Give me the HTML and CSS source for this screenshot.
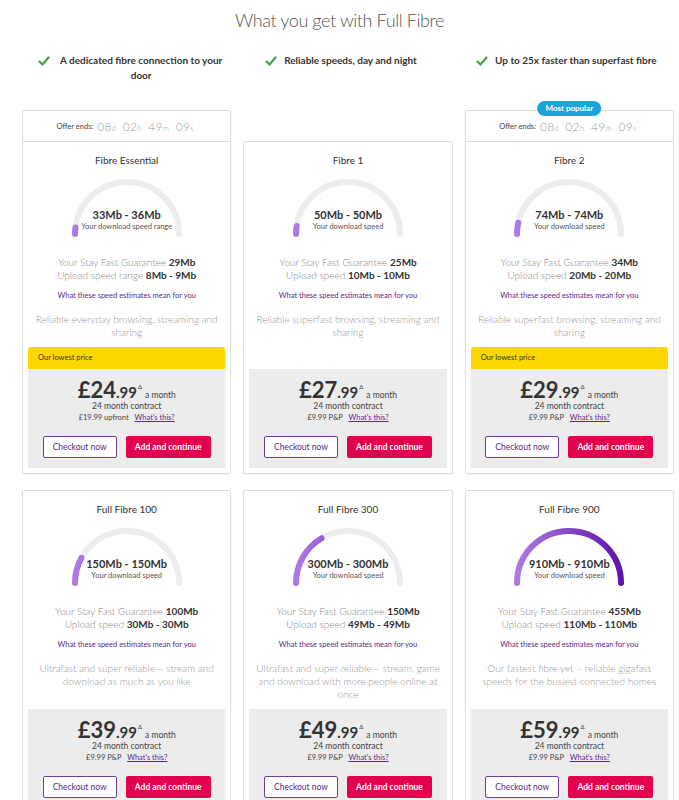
FILE: index.html
```html
<!DOCTYPE html>
<html lang="en">
<head>
    <meta charset="UTF-8">
    <meta name="viewport" content="width=device-width, initial-scale=1.0">
    <title>Full Fibre broadband</title>
    <link rel="stylesheet" href="styles.css">
</head>
<body>
    <h1 class="page-title">What you get with Full Fibre</h1>

    <ul class="features">
        <li>
            <svg class="tick" viewBox="0 0 12 10"><path d="M1.5 5.5 L4.5 8.5 L10.5 1.5"/></svg>
            <span>A dedicated fibre connection to your door</span>
        </li>
        <li>
            <svg class="tick" viewBox="0 0 12 10"><path d="M1.5 5.5 L4.5 8.5 L10.5 1.5"/></svg>
            <span>Reliable speeds, day and night</span>
        </li>
        <li>
            <svg class="tick" viewBox="0 0 12 10"><path d="M1.5 5.5 L4.5 8.5 L10.5 1.5"/></svg>
            <span>Up to 25x faster than superfast fibre</span>
        </li>
    </ul>

    <!-- shared gradient for the speed dials -->
    <svg class="svg-defs" width="0" height="0">
        <defs>
            <linearGradient id="dial-grad" gradientUnits="userSpaceOnUse" x1="0" y1="0" x2="112" y2="0">
                <stop offset="0" stop-color="#b07ee8"/>
                <stop offset="1" stop-color="#5c10a6"/>
            </linearGradient>
        </defs>
    </svg>

    <div class="plans">
        <!-- Fibre Essential -->
        <div class="plan">
            <div class="offer">Offer ends: <span class="timer">08<small>d</small> 02<small>h</small> 49<small>m</small> 09<small>s</small></span></div>
            <div class="plan-body">
                <h2 class="plan-name">Fibre Essential</h2>
                <div class="gauge">
                    <svg viewBox="0 0 112 62" width="112" height="62">
                        <path class="track" d="M4 57 A52 52 0 0 1 108 57"/>
                        <path class="fill" d="M4 57 A52 52 0 0 1 108 57" pathLength="100" stroke-dasharray="4 200"/>
                    </svg>
                    <div class="gauge-text"><b>33Mb - 36Mb</b><span>Your download speed range</span></div>
                </div>
                <p class="speeds">Your Stay Fast Guarantee <b>29Mb</b><br>Upload speed range <b>8Mb - 9Mb</b></p>
                <a class="estimates" href="#">What these speed estimates mean for you</a>
                <p class="blurb">Reliable everyday browsing, streaming and sharing</p>
                <div class="price-box">
                    <div class="lowest">Our lowest price</div>
                    <div class="price-area">
                        <div class="price"><span class="pounds">£24</span><span class="pence">.99</span><sup>Δ</sup><span class="per">a month</span></div>
                        <div class="contract">24 month contract</div>
                        <div class="extra">£19.99 upfront <a href="#">What's this?</a></div>
                        <div class="actions">
                            <button class="btn btn-checkout">Checkout now</button>
                            <button class="btn btn-add">Add and continue</button>
                        </div>
                    </div>
                </div>
            </div>
        </div>

        <!-- Fibre 1 -->
        <div class="plan plan-offset">
            <div class="plan-body">
                <h2 class="plan-name">Fibre 1</h2>
                <div class="gauge">
                    <svg viewBox="0 0 112 62" width="112" height="62">
                        <path class="track" d="M4 57 A52 52 0 0 1 108 57"/>
                        <path class="fill" d="M4 57 A52 52 0 0 1 108 57" pathLength="100" stroke-dasharray="5 200"/>
                    </svg>
                    <div class="gauge-text"><b>50Mb - 50Mb</b><span>Your download speed</span></div>
                </div>
                <p class="speeds">Your Stay Fast Guarantee <b>25Mb</b><br>Upload speed <b>10Mb - 10Mb</b></p>
                <a class="estimates" href="#">What these speed estimates mean for you</a>
                <p class="blurb">Reliable superfast browsing, streaming and sharing</p>
                <div class="price-box">
                    <div class="price-area">
                        <div class="price"><span class="pounds">£27</span><span class="pence">.99</span><sup>Δ</sup><span class="per">a month</span></div>
                        <div class="contract">24 month contract</div>
                        <div class="extra">£9.99 P&amp;P <a href="#">What's this?</a></div>
                        <div class="actions">
                            <button class="btn btn-checkout">Checkout now</button>
                            <button class="btn btn-add">Add and continue</button>
                        </div>
                    </div>
                </div>
            </div>
        </div>

        <!-- Fibre 2 -->
        <div class="plan">
            <span class="badge">Most popular</span>
            <div class="offer">Offer ends: <span class="timer">08<small>d</small> 02<small>h</small> 49<small>m</small> 09<small>s</small></span></div>
            <div class="plan-body">
                <h2 class="plan-name">Fibre 2</h2>
                <div class="gauge">
                    <svg viewBox="0 0 112 62" width="112" height="62">
                        <path class="track" d="M4 57 A52 52 0 0 1 108 57"/>
                        <path class="fill" d="M4 57 A52 52 0 0 1 108 57" pathLength="100" stroke-dasharray="7 200"/>
                    </svg>
                    <div class="gauge-text"><b>74Mb - 74Mb</b><span>Your download speed</span></div>
                </div>
                <p class="speeds">Your Stay Fast Guarantee <b>34Mb</b><br>Upload speed <b>20Mb - 20Mb</b></p>
                <a class="estimates" href="#">What these speed estimates mean for you</a>
                <p class="blurb">Reliable superfast browsing, streaming and sharing</p>
                <div class="price-box">
                    <div class="lowest">Our lowest price</div>
                    <div class="price-area">
                        <div class="price"><span class="pounds">£29</span><span class="pence">.99</span><sup>Δ</sup><span class="per">a month</span></div>
                        <div class="contract">24 month contract</div>
                        <div class="extra">£9.99 P&amp;P <a href="#">What's this?</a></div>
                        <div class="actions">
                            <button class="btn btn-checkout">Checkout now</button>
                            <button class="btn btn-add">Add and continue</button>
                        </div>
                    </div>
                </div>
            </div>
        </div>

        <!-- Full Fibre 100 -->
        <div class="plan">
            <div class="plan-body">
                <h2 class="plan-name">Full Fibre 100</h2>
                <div class="gauge">
                    <svg viewBox="0 0 112 62" width="112" height="62">
                        <path class="track" d="M4 57 A52 52 0 0 1 108 57"/>
                        <path class="fill" d="M4 57 A52 52 0 0 1 108 57" pathLength="100" stroke-dasharray="16 200"/>
                    </svg>
                    <div class="gauge-text"><b>150Mb - 150Mb</b><span>Your download speed</span></div>
                </div>
                <p class="speeds">Your Stay Fast Guarantee <b>100Mb</b><br>Upload speed <b>30Mb - 30Mb</b></p>
                <a class="estimates" href="#">What these speed estimates mean for you</a>
                <p class="blurb">Ultrafast and super reliable – stream and download as much as you like</p>
                <div class="price-box">
                    <div class="price-area">
                        <div class="price"><span class="pounds">£39</span><span class="pence">.99</span><sup>Δ</sup><span class="per">a month</span></div>
                        <div class="contract">24 month contract</div>
                        <div class="extra">£9.99 P&amp;P <a href="#">What's this?</a></div>
                        <div class="actions">
                            <button class="btn btn-checkout">Checkout now</button>
                            <button class="btn btn-add">Add and continue</button>
                        </div>
                    </div>
                </div>
            </div>
        </div>

        <!-- Full Fibre 300 -->
        <div class="plan">
            <div class="plan-body">
                <h2 class="plan-name">Full Fibre 300</h2>
                <div class="gauge">
                    <svg viewBox="0 0 112 62" width="112" height="62">
                        <path class="track" d="M4 57 A52 52 0 0 1 108 57"/>
                        <path class="fill" d="M4 57 A52 52 0 0 1 108 57" pathLength="100" stroke-dasharray="33 200"/>
                    </svg>
                    <div class="gauge-text"><b>300Mb - 300Mb</b><span>Your download speed</span></div>
                </div>
                <p class="speeds">Your Stay Fast Guarantee <b>150Mb</b><br>Upload speed <b>49Mb - 49Mb</b></p>
                <a class="estimates" href="#">What these speed estimates mean for you</a>
                <p class="blurb">Ultrafast and super reliable – stream, game and download with more people online at once</p>
                <div class="price-box">
                    <div class="price-area">
                        <div class="price"><span class="pounds">£49</span><span class="pence">.99</span><sup>Δ</sup><span class="per">a month</span></div>
                        <div class="contract">24 month contract</div>
                        <div class="extra">£9.99 P&amp;P <a href="#">What's this?</a></div>
                        <div class="actions">
                            <button class="btn btn-checkout">Checkout now</button>
                            <button class="btn btn-add">Add and continue</button>
                        </div>
                    </div>
                </div>
            </div>
        </div>

        <!-- Full Fibre 900 -->
        <div class="plan">
            <div class="plan-body">
                <h2 class="plan-name">Full Fibre 900</h2>
                <div class="gauge">
                    <svg viewBox="0 0 112 62" width="112" height="62">
                        <path class="track" d="M4 57 A52 52 0 0 1 108 57"/>
                        <path class="fill" d="M4 57 A52 52 0 0 1 108 57" pathLength="100" stroke-dasharray="100 200"/>
                    </svg>
                    <div class="gauge-text"><b>910Mb - 910Mb</b><span>Your download speed</span></div>
                </div>
                <p class="speeds">Your Stay Fast Guarantee <b>455Mb</b><br>Upload speed <b>110Mb - 110Mb</b></p>
                <a class="estimates" href="#">What these speed estimates mean for you</a>
                <p class="blurb">Our fastest fibre yet – reliable gigafast speeds for the busiest connected homes</p>
                <div class="price-box">
                    <div class="price-area">
                        <div class="price"><span class="pounds">£59</span><span class="pence">.99</span><sup>Δ</sup><span class="per">a month</span></div>
                        <div class="contract">24 month contract</div>
                        <div class="extra">£9.99 P&amp;P <a href="#">What's this?</a></div>
                        <div class="actions">
                            <button class="btn btn-checkout">Checkout now</button>
                            <button class="btn btn-add">Add and continue</button>
                        </div>
                    </div>
                </div>
            </div>
        </div>
    </div>
</body>
</html>
```

FILE: styles.css
```css
body {
    margin: 0;
    font-family: Lato, "Open Sans", sans-serif;
    color: #333;
    background: #fff;
}

.page-title {
    margin: 0;
    padding-top: 7px;
    font-size: 18px;
    line-height: 26px;
    font-weight: 300;
    letter-spacing: -0.4px;
    color: #555;
    text-align: center;
}

/* three selling points under the heading */
.features {
    list-style: none;
    margin: 20px 5px 0 22px;
    padding: 0;
    display: grid;
    grid-template-columns: repeat(3, 1fr);
    column-gap: 12px;
    font-size: 10px;
    font-weight: 700;
    line-height: 15px;
    color: #333;
}

.features li {
    display: flex;
    justify-content: center;
    align-items: flex-start;
    gap: 7px;
    padding: 0 10px;
    text-align: center;
}

.features li:nth-child(1) {
    padding-left: 16px;
    padding-right: 6px;
}

.features li:nth-child(2) {
    padding-right: 24px;
}

.features li:nth-child(3) {
    padding-right: 16px;
}

.tick {
    flex: none;
    width: 12px;
    height: 10px;
    margin-top: 3px;
}

.tick path {
    fill: none;
    stroke: #45a348;
    stroke-width: 2.2;
    stroke-linecap: round;
    stroke-linejoin: round;
}

.svg-defs {
    position: absolute;
    width: 0;
    height: 0;
}

/* plan cards */
.plans {
    margin: 27px 5px 0 22px;
    display: grid;
    grid-template-columns: repeat(3, 1fr);
    gap: 16px 12px;
}

.plan {
    position: relative;
    display: flex;
    flex-direction: column;
    border: 1px solid #dedede;
    border-radius: 2px;
    background: #fff;
    box-shadow: 0 1px 2px rgba(0, 0, 0, 0.05);
}

.plan-offset {
    margin-top: 31px;
}

.badge {
    position: absolute;
    top: -10px;
    left: 50%;
    transform: translateX(-50%);
    padding: 0 8px;
    height: 15px;
    line-height: 15px;
    border-radius: 8px;
    background: #19a4da;
    color: #fff;
    font-size: 8px;
    font-weight: 700;
    white-space: nowrap;
}

.offer {
    height: 30px;
    border-bottom: 1px solid #dedede;
    display: flex;
    align-items: center;
    justify-content: center;
    gap: 4px;
    font-size: 7.5px;
    color: #444;
}

.timer {
    font-size: 12px;
    font-weight: 300;
    color: #9a9a9a;
    letter-spacing: 0.3px;
}

.timer small {
    font-size: 7.5px;
    margin-right: 3px;
}

.plan-body {
    flex: 1;
    display: flex;
    flex-direction: column;
    align-items: center;
    text-align: center;
    padding: 11px 0 0;
}

.plan-name {
    margin: 0;
    font-size: 10px;
    line-height: 14px;
    font-weight: 400;
    color: #333;
}

.gauge {
    position: relative;
    margin-top: 10px;
    width: 112px;
    height: 62px;
}

.gauge svg {
    display: block;
}

.gauge path {
    fill: none;
    stroke-width: 6;
    stroke-linecap: round;
}

.gauge .track {
    stroke: #ededed;
}

.gauge .fill {
    stroke: url(#dial-grad);
}

.gauge-text {
    position: absolute;
    top: 31px;
    left: -20px;
    right: -20px;
    display: flex;
    flex-direction: column;
    align-items: center;
}

.gauge-text b {
    font-size: 11px;
    line-height: 14px;
    color: #333;
}

.gauge-text span {
    font-size: 7.5px;
    line-height: 10px;
    color: #555;
}

.speeds {
    margin: 17px 0 0;
    font-size: 10px;
    line-height: 13px;
    font-weight: 300;
    color: #888;
}

.speeds b {
    font-weight: 700;
    color: #333;
}

.estimates {
    margin-top: 8px;
    font-size: 7.5px;
    line-height: 12px;
    color: #5b2a86;
    text-decoration: none;
}

.blurb {
    margin: 11px 0 0;
    padding: 0 6px 8px;
    font-size: 10px;
    line-height: 13px;
    font-weight: 300;
    color: #999;
}

/* price panel sits at the foot of every card */
.price-box {
    align-self: stretch;
    margin: auto 5px 5px;
}

.lowest {
    height: 22px;
    line-height: 22px;
    padding-left: 10px;
    text-align: left;
    border-radius: 3px 3px 0 0;
    background: #fdd800;
    font-size: 7.5px;
    color: #333;
}

.price-area {
    background: #ececec;
    padding: 10px 0 10px;
}

.price {
    height: 22px;
    display: flex;
    justify-content: center;
    align-items: baseline;
    color: #444;
}

.price span,
.price sup {
    line-height: 1;
}

.pounds {
    font-size: 22px;
    font-weight: 700;
    color: #333;
}

.pence {
    font-size: 15px;
    font-weight: 700;
    color: #333;
}

.price sup {
    font-size: 6px;
    position: relative;
    top: -9px;
    margin: 0 3px 0 1px;
}

.price .per {
    font-size: 8.5px;
}

.contract {
    font-size: 8.5px;
    line-height: 10px;
    color: #444;
}

.extra {
    font-size: 7.5px;
    line-height: 14px;
    color: #444;
}

.extra a {
    margin-left: 4px;
    color: #5b2a86;
}

.actions {
    margin-top: 11px;
    display: flex;
    justify-content: center;
    gap: 9px;
}

.btn {
    height: 22px;
    padding: 0;
    border-radius: 2px;
    font-family: inherit;
    font-size: 8.5px;
    cursor: pointer;
}

.btn-checkout {
    width: 74px;
    border: 1px solid #6b3fa0;
    background: #fff;
    color: #5b2a86;
}

.btn-add {
    width: 85px;
    border: none;
    background: #e3004f;
    color: #fff;
    font-weight: 700;
}
```
